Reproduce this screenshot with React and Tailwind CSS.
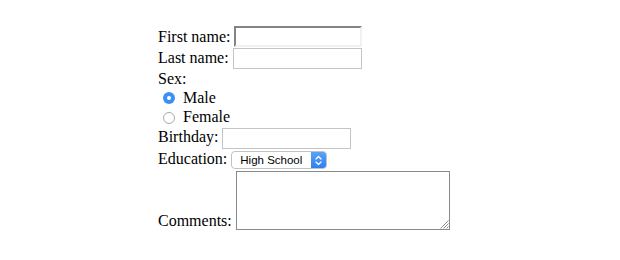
import React from "react";

function Radio({ checked }) {
  if (checked) {
    return (
      <span className="w-[12px] h-[12px] rounded-full bg-[#3d8ff5] flex items-center justify-center shrink-0">
        <span className="block w-[4px] h-[4px] rounded-full bg-white" />
      </span>
    );
  }
  return (
    <span className="block box-border w-[12px] h-[12px] rounded-full bg-white border border-[#a9a9a9] shrink-0" />
  );
}

export default function App() {
  return (
    <div className="w-[620px] h-[260px] bg-white font-['Liberation_Serif',serif] text-[16px] leading-[18px] text-black">
      <form className="flex flex-col pl-[158px] pt-[26px]">
        <div className="flex h-[22px]">
          <label className="mt-[2px]">First name:</label>
          <input
            type="text"
            className="ml-[4px] w-[128px] h-[21px] bg-white border-2 border-t-[#838383] border-l-[#838383] border-r-[#f1f1f1] border-b-[#f1f1f1] outline-none"
          />
        </div>
        <div className="flex h-[22px]">
          <label className="mt-[1px]">Last name:</label>
          <input
            type="text"
            className="ml-[4px] w-[129px] h-[21px] bg-white border border-[#c4c4c4] outline-none"
          />
        </div>
        <div className="h-[19px]">Sex:</div>
        <div className="flex h-[19px] pl-[5px]">
          <span className="block mt-[3px]">
            <Radio checked />
          </span>
          <span className="ml-[8px]">Male</span>
        </div>
        <div className="flex h-[19px] pl-[5px]">
          <span className="block mt-[4px]">
            <Radio />
          </span>
          <span className="ml-[8px]">Female</span>
        </div>
        <div className="flex h-[23px]">
          <label className="mt-[1px]">Birthday:</label>
          <input
            type="text"
            className="ml-[4px] mt-[1px] w-[129px] h-[21px] bg-white border border-[#c4c4c4] outline-none"
          />
        </div>
        <div className="flex h-[20px]">
          <label>Education:</label>
          <div className="ml-[4px] mt-[1px] w-[96px] h-[18px] flex rounded-[4px] border border-[#c2c2c2] bg-white overflow-hidden">
            <span className="flex-1 pl-[8px] font-['Liberation_Sans',sans-serif] text-[11.5px] leading-[16px] text-black">
              High School
            </span>
            <span className="w-[15px] h-full bg-gradient-to-b from-[#5aa3f8] to-[#2f7ff2] flex items-center justify-center">
              <svg width="7" height="11" viewBox="0 0 7 11" fill="none" stroke="white" strokeWidth="1.3" strokeLinecap="round" strokeLinejoin="round">
                <path d="M1 4 L3.5 1.5 L6 4" />
                <path d="M1 7 L3.5 9.5 L6 7" />
              </svg>
            </span>
          </div>
        </div>
        <div className="flex h-[61px]">
          <label className="mt-[42px]">Comments:</label>
          <div className="relative ml-[4px] mt-[1px] w-[214px] h-[59px] bg-white border border-[#8a8a8a]">
            <svg className="absolute right-0 bottom-0" width="11" height="11" viewBox="0 0 11 11" stroke="#8f8f8f" strokeWidth="1">
              <path d="M10.5 2.5 L2.5 10.5" />
              <path d="M10.5 5.5 L5.5 10.5" />
              <path d="M10.5 8.5 L8.5 10.5" />
            </svg>
          </div>
        </div>
      </form>
    </div>
  );
}
